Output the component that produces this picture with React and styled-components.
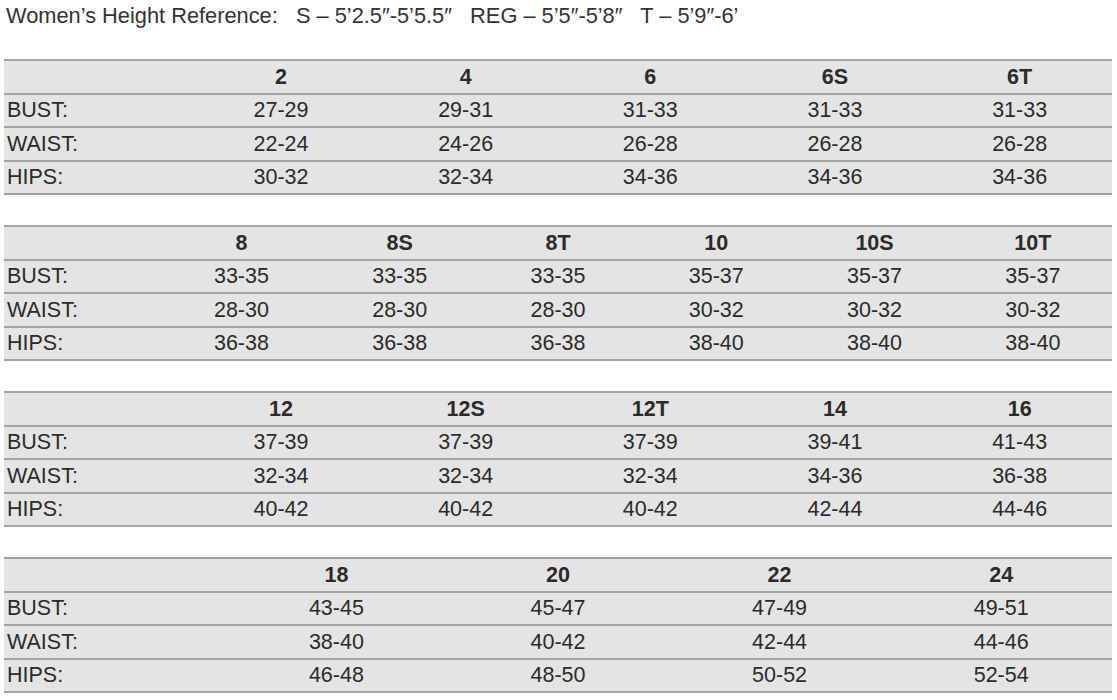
import React from "react";
import styled, { createGlobalStyle } from "styled-components";

const Global = createGlobalStyle`
  html, body { margin: 0; padding: 0; background: #ffffff; }
  body { font-family: "Liberation Sans", Arial, Helvetica, sans-serif; color: #2e2e2e; }
`;

const Page = styled.div`
  padding: 5px 5px 0 4px;
  width: 1108px;
`;

const Title = styled.div`
  font-size: 21.8px;
  line-height: 22px;
  height: 22px;
  padding-left: 2px;
  color: #333;
  white-space: pre;
  margin-bottom: 32px;
`;

const Table = styled.table`
  width: 1108px;
  table-layout: fixed;
  border-collapse: separate;
  border-spacing: 0;
  background: #e4e4e4;
  border-top: 2px solid #a3a3a3;
  margin-bottom: 30px;
  font-size: 21.5px;
`;

const Cell = styled.td`
  height: 31.5px;
  padding: 0;
  border-bottom: 2px solid #a3a3a3;
  text-align: ${(p) => (p.$label ? "left" : "center")};
  padding-left: ${(p) => (p.$label ? "3px" : "0")};
  font-weight: ${(p) => (p.$head ? "bold" : "normal")};
  color: #2b2b2b;
  vertical-align: middle;
  line-height: 24px;
`;

const tables = [
  {
    sizes: ["2", "4", "6", "6S", "6T"],
    rows: [
      ["BUST:", "27-29", "29-31", "31-33", "31-33", "31-33"],
      ["WAIST:", "22-24", "24-26", "26-28", "26-28", "26-28"],
      ["HIPS:", "30-32", "32-34", "34-36", "34-36", "34-36"],
    ],
  },
  {
    sizes: ["8", "8S", "8T", "10", "10S", "10T"],
    rows: [
      ["BUST:", "33-35", "33-35", "33-35", "35-37", "35-37", "35-37"],
      ["WAIST:", "28-30", "28-30", "28-30", "30-32", "30-32", "30-32"],
      ["HIPS:", "36-38", "36-38", "36-38", "38-40", "38-40", "38-40"],
    ],
  },
  {
    sizes: ["12", "12S", "12T", "14", "16"],
    rows: [
      ["BUST:", "37-39", "37-39", "37-39", "39-41", "41-43"],
      ["WAIST:", "32-34", "32-34", "32-34", "34-36", "36-38"],
      ["HIPS:", "40-42", "40-42", "40-42", "42-44", "44-46"],
    ],
  },
  {
    sizes: ["18", "20", "22", "24"],
    rows: [
      ["BUST:", "43-45", "45-47", "47-49", "49-51"],
      ["WAIST:", "38-40", "40-42", "42-44", "44-46"],
      ["HIPS:", "46-48", "48-50", "50-52", "52-54"],
    ],
  },
];

export default function App() {
  return (
    <Page>
      <Global />
      <Title>{"Women’s Height Reference:   S – 5’2.5″-5’5.5″   REG – 5’5″-5’8″   T – 5’9″-6’"}</Title>
      {tables.map((t, i) => (
        <Table key={i}>
          <tbody>
            <tr>
              <Cell $label $head></Cell>
              {t.sizes.map((s) => (
                <Cell key={s} $head>{s}</Cell>
              ))}
            </tr>
            {t.rows.map((r) => (
              <tr key={r[0]}>
                {r.map((v, j) => (
                  <Cell key={j} $label={j === 0}>{v}</Cell>
                ))}
              </tr>
            ))}
          </tbody>
        </Table>
      ))}
    </Page>
  );
}
